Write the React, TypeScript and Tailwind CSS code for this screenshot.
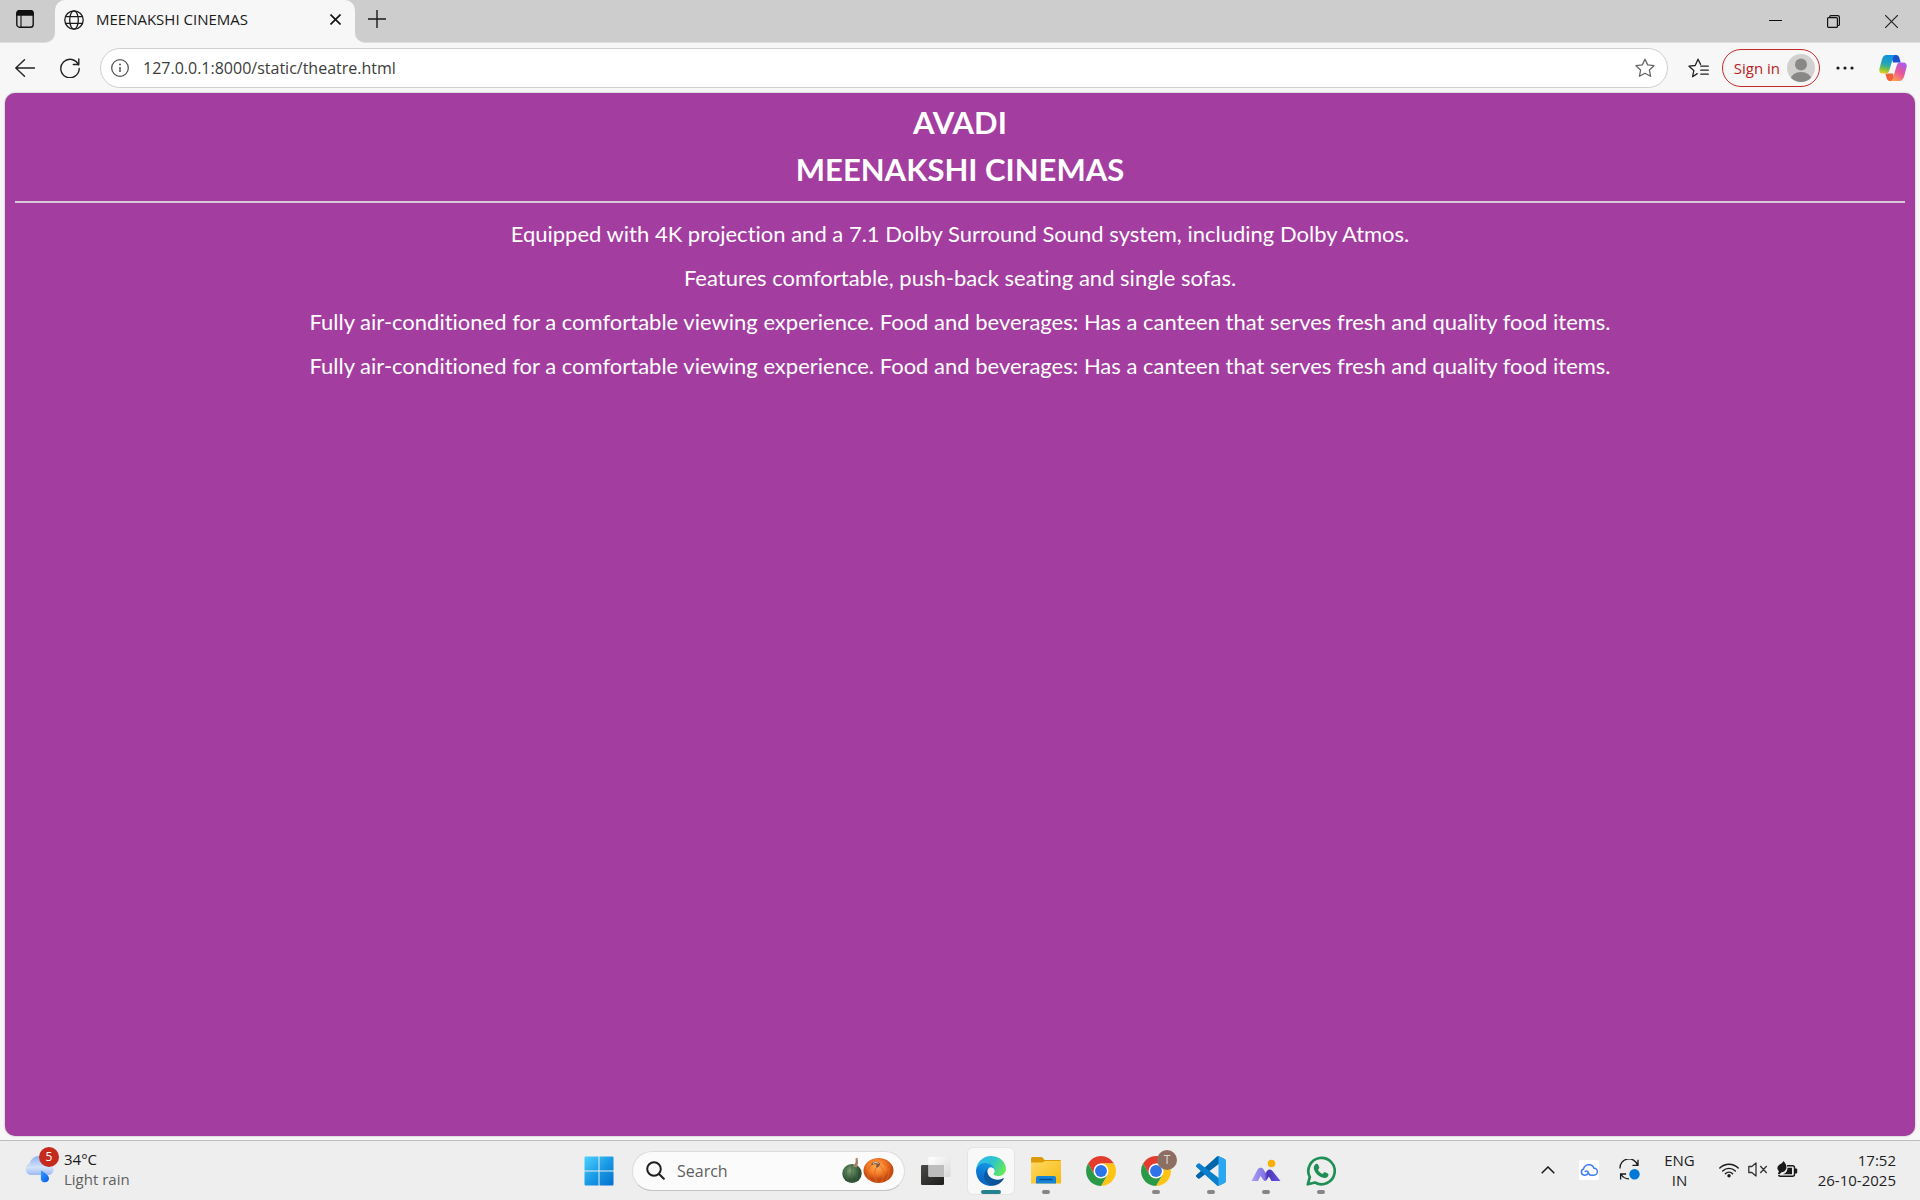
import type { ReactNode } from "react";

const paragraphs = [
  "Equipped with 4K projection and a 7.1 Dolby Surround Sound system, including Dolby Atmos.",
  "Features comfortable, push-back seating and single sofas.",
  "Fully air-conditioned for a comfortable viewing experience. Food and beverages: Has a canteen that serves fresh and quality food items.",
  "Fully air-conditioned for a comfortable viewing experience. Food and beverages: Has a canteen that serves fresh and quality food items.",
];

function TabActionsIcon() {
  return (
    <svg width="18" height="18" viewBox="0 0 18 18" fill="none" stroke="#111" strokeWidth="1.4">
      <rect x="0.8" y="0.8" width="16.4" height="16.4" rx="2.8" />
      <path d="M1 5V3a2.4 2.4 0 0 1 2.4-2.4h11.2A2.4 2.4 0 0 1 17 3v2z" fill="#111" />
      <path d="M5 5v12" strokeWidth="1.1" />
    </svg>
  );
}

function GlobeIcon() {
  return (
    <svg width="20" height="20" viewBox="0 0 20 20" fill="none" stroke="#1b1b1b" strokeWidth="1.3">
      <circle cx="10" cy="10" r="9.2" />
      <ellipse cx="10" cy="10" rx="4.3" ry="9.2" />
      <path d="M1.7 6.7h16.6M1.7 13.3h16.6" />
    </svg>
  );
}

function StarIcon({ lines = false }: { lines?: boolean }) {
  return lines ? (
    <svg width="21" height="20" viewBox="0 0 21 20" fill="none" stroke="#222" strokeWidth="1.3" strokeLinecap="round" strokeLinejoin="round">
      <path d="M9.2 15.6 4.6 18.7l1.2-6.1L1 8.2l6.2-.7L10 1.2l2.6 5.2M12.8 8.2h7.5M12.8 12.2h7.5M12.8 16.2h7.5" />
    </svg>
  ) : (
    <svg width="20" height="20" viewBox="0 0 20 20" fill="none" stroke="#666" strokeWidth="1.3" strokeLinejoin="round">
      <path d="m10 1.2 2.7 5.7 6.3.8-4.6 4.3 1.2 6.3-5.6-3.1-5.6 3.1L5.6 12 1 7.7l6.3-.8z" />
    </svg>
  );
}

function CopilotIcon() {
  return (
    <svg width="28" height="26" viewBox="0 0 28 26">
      <defs>
        <linearGradient id="cpA" x1="0.4" y1="0" x2="0.2" y2="1">
          <stop offset="0" stopColor="#0d91e1" />
          <stop offset="0.5" stopColor="#2aa8b0" />
          <stop offset="0.75" stopColor="#7fc241" />
          <stop offset="1" stopColor="#f5d020" />
        </linearGradient>
        <linearGradient id="cpB" x1="0.8" y1="0" x2="0.2" y2="1">
          <stop offset="0" stopColor="#a45cf0" />
          <stop offset="0.5" stopColor="#e8559a" />
          <stop offset="1" stopColor="#ffa34e" />
        </linearGradient>
      </defs>
      <path d="M12 0h5.200c1.700 0 2.600 1.200 3.100 2.800L21.700 7.500H14z" fill="#1b4fd0" />
      <path d="M16 26h-5.200c-1.700 0-2.600-1.200-3.100-2.800L6.300 18.500H14z" fill="#f0603a" />
      <path d="M7.800 0h8.400c-1.300.5-1.800 1.600-2.200 3l-3.700 12.500C9.700 17.500 8.600 18.500 7 18.500H3.600C.9 18.500-.2 16.400.5 13.600L3 4.200C3.800 1.500 5.300 0 7.800 0z" fill="url(#cpA)" />
      <path d="M20.200 26h-8.400c1.300-.5 1.800-1.600 2.200-3l3.700-12.500c.6-2 1.700-3 3.300-3h3.400c2.700 0 3.800 2.100 3.100 4.900L25 21.800c-.8 2.700-2.300 4.200-4.800 4.200z" fill="url(#cpB)" />
    </svg>
  );
}

function WeatherIcon() {
  return (
    <svg width="32" height="28" viewBox="0 0 32 28">
      <defs>
        <linearGradient id="wc" x1="0" y1="0" x2="0" y2="1">
          <stop offset="0" stopColor="#8fb2ee" />
          <stop offset="0.6" stopColor="#d3e2fa" />
          <stop offset="1" stopColor="#9cbaf0" />
        </linearGradient>
        <linearGradient id="wd" x1="0" y1="0" x2="1" y2="1">
          <stop offset="0" stopColor="#35a0ff" />
          <stop offset="1" stopColor="#0759e8" />
        </linearGradient>
      </defs>
      <path d="M6.500 20A6 6 0 0 1 5.500 8.600 9.500 9.500 0 0 1 24 8.200 6 6 0 0 1 25 20z" fill="url(#wc)" />
      <path d="M17 15.500c4 2.300 8 4.700 8 8.300a4.200 4.200 0 0 1-8.200.4z" fill="url(#wd)" />
    </svg>
  );
}

function WindowsIcon() {
  return (
    <svg width="30" height="30" viewBox="0 0 30 30">
      <defs>
        <linearGradient id="win" gradientUnits="userSpaceOnUse" x1="0" y1="0" x2="30" y2="30">
          <stop offset="0" stopColor="#4fd4ff" />
          <stop offset="0.5" stopColor="#1a9be5" />
          <stop offset="1" stopColor="#006fd0" />
        </linearGradient>
      </defs>
      <path d="M1.500.5h13v14H.5v-13a1 1 0 0 1 1-1zM15.500.5h13a1 1 0 0 1 1 1v13h-14zM.5 15.500h14v14h-13a1 1 0 0 1-1-1zM15.500 15.500h14v13a1 1 0 0 1-1 1h-13z" fill="url(#win)" />
    </svg>
  );
}

function PumpkinsIcon() {
  return (
    <svg width="52" height="28" viewBox="0 0 52 28">
      <defs>
        <radialGradient id="pg" cx="0.4" cy="0.35">
          <stop offset="0" stopColor="#7da072" />
          <stop offset="1" stopColor="#2c4f33" />
        </radialGradient>
        <radialGradient id="po" cx="0.45" cy="0.35">
          <stop offset="0" stopColor="#ffb054" />
          <stop offset="0.6" stopColor="#f47b28" />
          <stop offset="1" stopColor="#c54a12" />
        </radialGradient>
      </defs>
      <ellipse cx="10" cy="16.500" rx="9.700" ry="9.500" fill="url(#pg)" />
      <path d="M6 8.500c-3 5-2.500 12 1.500 17M10.500 8c-1 6-1 12 0 18M14 8.500c3 5 2 12-1.500 17" fill="none" stroke="#3f6546" strokeWidth="0.7" />
      <path d="M10.500 9.500c3-1.500 3.500-5 3-8l2-.8c1 4 .6 7.500-1 9.800z" fill="#a58267" />
      <ellipse cx="36.500" cy="13.500" rx="15" ry="12.500" fill="url(#po)" />
      <path d="M31 7c-6 3-7 12-2 17M35 9c-3 5-3 11 0 16.500M38 9c5 4 5 11 1 16.500M41 6c7 3 8 11 3 17" fill="none" stroke="#e06a22" strokeWidth="0.9" />
      <path d="M29.500 6.500c2-2.500 7-2.500 8.500 0 .5 1.500-1 3-2.500 4.200l-1.700-1c1-1.200 1-2.300-.3-2.700-1.300-.2-2 .8-4 .8z" fill="#7e5b42" />
      <path d="M31 6.500c1.500-1.200 4-1.200 5.500-.2" fill="none" stroke="#f6dcc5" />
    </svg>
  );
}

function TaskViewIcon() {
  return (
    <svg width="30" height="30" viewBox="0 0 30 30">
      <defs>
        <linearGradient id="tvd" x1="0" y1="0" x2="1" y2="1">
          <stop offset="0" stopColor="#4a4a48" />
          <stop offset="1" stopColor="#1d1d1c" />
        </linearGradient>
        <linearGradient id="tvl" x1="0" y1="0" x2="1" y2="1">
          <stop offset="0" stopColor="#fff" />
          <stop offset="1" stopColor="#d9d9d9" />
        </linearGradient>
      </defs>
      <rect x="0" y="9" width="23" height="20" rx="1.200" fill="url(#tvd)" />
      <rect x="7.500" y="1" width="22" height="20" rx="1.200" fill="url(#tvl)" />
      <path d="M7.500 9H23v12H8.700a1.200 1.200 0 0 1-1.200-1.200z" fill="#bdbdbd" />
    </svg>
  );
}

function EdgeIcon() {
  return (
    <svg width="30" height="30" viewBox="0 0 256 256">
      <defs>
        <linearGradient id="e1" x1="0.25" y1="0.5" x2="1" y2="0.5">
          <stop offset="0" stopColor="#0c59a4" />
          <stop offset="1" stopColor="#114a8b" />
        </linearGradient>
        <linearGradient id="e2" x1="0.700" y1="0" x2="0.300" y2="1">
          <stop offset="0" stopColor="#1b9de2" />
          <stop offset="0.5" stopColor="#0b7dd8" />
          <stop offset="1" stopColor="#0a5eb8" />
        </linearGradient>
        <linearGradient id="e3" x1="0" y1="0.200" x2="1" y2="0.600">
          <stop offset="0" stopColor="#35b8f1" />
          <stop offset="0.5" stopColor="#2cc3d2" />
          <stop offset="1" stopColor="#66eb55" />
        </linearGradient>
      </defs>
      <path d="M231 190.500c-3.400 1.800-6.900 3.400-10.500 4.700a101 101 0 0 1-35.700 6.400c-47 0-88-32.300-88-73.900a31.400 31.400 0 0 1 16.400-27.300c-42.600 1.800-53.500 46.200-53.500 72.100 0 73.500 67.700 80.900 82.300 80.900 7.900 0 19.700-2.300 26.900-4.600l1.300-.4a128.300 128.300 0 0 0 66.600-52.800 4 4 0 0 0-5.800-5.100z" fill="url(#e1)" />
      <path d="M105.700 241.400A79.200 79.200 0 0 1 83 220.100a80.700 80.700 0 0 1 29.500-120c3.200-1.400 8.500-4.100 15.600-4a32.400 32.400 0 0 1 25.700 13 31.900 31.900 0 0 1 6.300 18.700c0-.2 24.500-79.600-80-79.600-43.900 0-80 41.700-80 78.200a130.200 130.200 0 0 0 12.100 56 128 128 0 0 0 156.400 67 75.500 75.500 0 0 1-62.800-8z" fill="url(#e2)" />
      <path d="M152.300 148.900c-.8 1-3.300 2.500-3.300 5.700 0 2.600 1.700 5.100 4.700 7.200 14.300 10 41.400 8.600 41.500 8.600a59.600 59.600 0 0 0 30.300-8.300 61.400 61.400 0 0 0 30.400-52.900c.3-22.400-8-37.300-11.300-43.900C223.500 23.900 177.700 0 128 0A128 128 0 0 0 0 126.200c.5-36.500 36.800-66 80-66 3.500 0 23.500.3 42 10a72.600 72.600 0 0 1 30.900 29.300c6.100 10.600 7.200 24.100 7.200 29.500s-2.700 13.300-7.800 19.900z" fill="url(#e3)" />
    </svg>
  );
}

function FolderIcon() {
  return (
    <svg width="30" height="27" viewBox="0 0 30 27">
      <defs>
        <linearGradient id="fy" x1="0" y1="0" x2="1" y2="1">
          <stop offset="0" stopColor="#ffd965" />
          <stop offset="1" stopColor="#f7b90e" />
        </linearGradient>
      </defs>
      <path d="M0 1.500A1.500 1.500 0 0 1 1.500 0h8.700c.8 0 1.300.3 1.800.9L13.500 3H29a1 1 0 0 1 1 1v4H0z" fill="#dc9a08" />
      <path d="M0 5.500h11.500L14 4h16v22.500H0z" fill="url(#fy)" />
      <path d="M5 26.500V21a2 2 0 0 1 2-2h16a2 2 0 0 1 2 2v5.500z" fill="#1583d8" />
      <path d="M9 22.500h12" stroke="#064f93" strokeWidth="1.500" strokeLinecap="round" />
    </svg>
  );
}

function ChromeIcon() {
  return (
    <svg width="30" height="30" viewBox="0 0 48 48">
      <path d="M24 12h20.780A24 24 0 0 0 3.220 12L13.610 30z" fill="#e33b2e" />
      <path d="M34.390 30 24 48A24 24 0 0 0 44.780 12H24z" fill="#fdc315" />
      <path d="M13.610 30 3.220 12A24 24 0 0 0 24 48l10.390-18z" fill="#2a9a48" />
      <circle cx="24" cy="24" r="12" fill="#fff" />
      <circle cx="24" cy="24" r="9.500" fill="#2c74e8" />
    </svg>
  );
}

function VsCodeIcon() {
  return (
    <svg width="30" height="30" viewBox="0 0 100 100">
      <path d="M96.500 10.800 75.900.900a6.200 6.200 0 0 0-7.100 1.200L1.300 63.600a4.200 4.200 0 0 0 0 6.200l5.500 5a4.200 4.200 0 0 0 5.400.2l81.200-61.600c2.700-2.100 6.600-.1 6.600 3.300v-.3c0-2.400-1.400-4.600-3.500-5.600z" fill="#0065a9" />
      <path d="m96.500 89.200-20.600 9.900a6.200 6.200 0 0 1-7.100-1.200L1.300 36.400a4.200 4.200 0 0 1 0-6.200l5.500-5a4.200 4.200 0 0 1 5.400-.2l81.200 61.600c2.700 2.100 6.600.1 6.600-3.300v.3c0 2.400-1.400 4.600-3.500 5.600z" fill="#0a80cc" />
      <path d="M75.900 99.100a6.200 6.200 0 0 1-7.100-1.200c2.300 2.300 6.200.7 6.200-2.600V4.700c0-3.300-3.900-4.900-6.200-2.600A6.200 6.200 0 0 1 75.900.900l20.600 9.900a6.200 6.200 0 0 1 3.500 5.600v67.200c0 2.400-1.400 4.600-3.500 5.600z" fill="#2aa7f2" />
    </svg>
  );
}

function PeaksIcon() {
  return (
    <svg width="30" height="24" viewBox="0 0 30 24">
      <defs>
        <linearGradient id="pk" x1="0" y1="0" x2="1" y2="0">
          <stop offset="0" stopColor="#aba0f3" />
          <stop offset="0.45" stopColor="#8373e6" />
          <stop offset="0.55" stopColor="#4b35b8" />
          <stop offset="1" stopColor="#6d51e0" />
        </linearGradient>
      </defs>
      <path d="M.5 22 6.600 10.500c1.300-2.400 4.800-2.400 6 0l2 3.600 1.300-2c1.300-2.100 4.300-2.100 5.600 0L29.500 22h-9l-2.600-4.500-2.500 4-2.200.5-3.700-5L7 22z" fill="url(#pk)" />
      <circle cx="20.500" cy="4.500" r="3.800" fill="#fbae05" />
    </svg>
  );
}

function WhatsAppIcon() {
  return (
    <svg width="30" height="30" viewBox="0 0 30 30">
      <path d="m1.800 28.300 2-7.200A13.200 13.200 0 1 1 9 26.500z" fill="none" stroke="#1f8f55" strokeWidth="2.700" strokeLinejoin="round" />
      <path d="M10.300 7.800c.6-.3 1.300-.1 1.600.5l1.300 2.800c.2.500.1 1-.2 1.400l-1 1.200c1 2 2.500 3.400 4.500 4.300l1.300-1.400c.3-.4.800-.5 1.300-.3l2.700 1.300c.6.300.8.900.7 1.500-.4 2-2.200 3.100-4.200 2.900-5.500-.7-10-5.200-10.500-9.900-.1-1.800.9-3.500 2.500-4.300z" fill="#1f8f55" />
    </svg>
  );
}

function CloudTile() {
  return (
    <svg width="20" height="20" viewBox="0 0 20 20">
      <rect width="20" height="20" rx="2" fill="#fff" />
      <path d="M9.500 13.200c-1 1.300-2.200 2-4.200 2A3.200 3.200 0 0 1 4.500 9 5.500 5.500 0 0 1 15 8.200a3.500 3.500 0 0 1-.2 7h-2.600c-2.400 0-2.300-1.700-3.200-3.200-.7-1.100-1.900-1.200-2.800-.6" fill="none" stroke="#3f7df0" strokeWidth="1.500" strokeLinecap="round" />
    </svg>
  );
}

function SyncIcon() {
  return (
    <svg width="21" height="21" viewBox="0 0 21 21" fill="none" stroke="#1a1a1a" strokeWidth="1.300">
      <path d="M1 9.500A9 9 0 0 1 18.500 6M19 .8V6.300h-5.500M10 19.800a9 9 0 0 1-8-4.500M1.600 20.500V15h5.500" />
      <circle cx="15.500" cy="15.300" r="5.200" fill="#0078d7" stroke="none" />
    </svg>
  );
}

function WifiIcon() {
  return (
    <svg width="20" height="16" viewBox="0 0 20 16" fill="none" stroke="#1a1a1a" strokeWidth="1.400" strokeLinecap="round">
      <path d="M.8 6a13 13 0 0 1 18.400 0M3.700 8.900a9 9 0 0 1 12.600 0M6.400 11.700a5.200 5.200 0 0 1 7.200 0" />
      <circle cx="10" cy="13.800" r="1.700" fill="#1a1a1a" stroke="none" />
    </svg>
  );
}

function MutedIcon() {
  return (
    <svg width="20" height="15" viewBox="0 0 20 15" fill="none" stroke="#333" strokeWidth="1.300" strokeLinejoin="round">
      <path d="M.8 4.500h3L8 1v13L3.800 10.500h-3zM12.300 4l6.400 7M18.700 4l-6.400 7" />
    </svg>
  );
}

function BatteryIcon() {
  return (
    <svg width="21" height="17" viewBox="0 0 21 17">
      <path d="M10 4.800h5.500a2 2 0 0 1 2 2v6.500a2 2 0 0 1-2 2H3.500c-1 0-1.700-.5-2-1.200" fill="none" stroke="#1a1a1a" strokeWidth="1.400" />
      <path d="M10.500 6.800H15v6.500H5.500c3-.5 5-3 5-6.500z" fill="#1a1a1a" />
      <path d="M18 7.500h1.200a1 1 0 0 1 1 1v3a1 1 0 0 1-1 1H18z" fill="#1a1a1a" />
      <path d="M6.500 0c2.300 2.300 3.600 5.300 2.600 8-.8 2-2.600 3.300-4.500 3.300L2.200 13.500.8 12.800l1.200-2.600C-.2 8.500 0 5.700 2 4c1.300-1.200 3.500-1.500 4.500-4z" fill="#1a1a1a" />
    </svg>
  );
}

function TaskButton({ label, open = false, active = false, children }: { label: string; open?: boolean; active?: boolean; children: ReactNode }) {
  return (
    <button
      aria-label={label}
      className={
        active
          ? "relative flex size-12 items-center justify-center rounded-md border border-[#e4e4e4] bg-[#f8f8f8]"
          : "relative flex size-12 items-center justify-center rounded-md border border-transparent"
      }
    >
      {children}
      {open && (
        <span
          className={
            active
              ? "absolute bottom-0 left-1/2 h-1 w-5 -translate-x-1/2 rounded-full bg-[#238391]"
              : "absolute bottom-0 left-1/2 h-1 w-2 -translate-x-1/2 rounded-full bg-[#868686]"
          }
        />
      )}
    </button>
  );
}

function TabStrip() {
  return (
    <header className="flex h-[43px] shrink-0">
      <div className="flex w-[55px] items-center rounded-br-[10px] border-b border-[#dedede] bg-[#cdcdcd] pb-1 pl-4">
        <button aria-label="Tab actions">
          <TabActionsIcon />
        </button>
      </div>
      <div className="w-[300px] bg-[#cdcdcd]">
        <div className="flex h-full items-center rounded-t-[10px] bg-[#f7f7f7] pr-3 pb-1 pl-[9px]">
          <GlobeIcon />
          <span className="ml-3 flex-1 text-[15px] text-[#1a1a1a]">MEENAKSHI CINEMAS</span>
          <button aria-label="Close tab" className="p-[2px]">
            <svg width="11" height="11" viewBox="0 0 11 11" stroke="#111" strokeWidth="1.600">
              <path d="m.5.500 10 10M10.500.5l-10 10" />
            </svg>
          </button>
        </div>
      </div>
      <div className="flex flex-1 items-center justify-between rounded-bl-[10px] border-b border-[#dedede] bg-[#cdcdcd] pb-1 pl-[13px]">
        <button aria-label="New tab">
          <svg width="18" height="18" viewBox="0 0 18 18" stroke="#1a1a1a" strokeWidth="1.400">
            <path d="M9 0v18M0 9h18" />
          </svg>
        </button>
        <div className="flex pt-1">
          <button aria-label="Minimize" className="flex h-9 w-[58px] items-center justify-center">
            <svg width="13" height="13" viewBox="0 0 13 13" stroke="#111">
              <path d="M0 5.500h13" />
            </svg>
          </button>
          <button aria-label="Restore" className="flex h-9 w-[58px] items-center justify-center">
            <svg width="13" height="13" viewBox="0 0 13 13" fill="none" stroke="#111" strokeWidth="1.200">
              <rect x="0.600" y="2.600" width="9.800" height="9.800" rx="1" />
              <path d="M2.800 2.500V1.500a.9.900 0 0 1 .9-.9h7.100a1.600 1.600 0 0 1 1.600 1.600v7.400a.9.900 0 0 1-.9.900h-1" />
            </svg>
          </button>
          <button aria-label="Close window" className="flex h-9 w-[58px] items-center justify-center">
            <svg width="13" height="13" viewBox="0 0 13 13" stroke="#222" strokeWidth="1.200">
              <path d="m0 0 13 13M13 0 0 13" />
            </svg>
          </button>
        </div>
      </div>
    </header>
  );
}

function Toolbar() {
  return (
    <div className="flex h-[50px] shrink-0 items-center pr-[13px] pl-[15px]">
      <button aria-label="Back">
        <svg width="20" height="18" viewBox="0 0 20 18" fill="none" stroke="#222" strokeWidth="1.400" strokeLinecap="round" strokeLinejoin="round">
          <path d="M9.500.8.800 9l8.700 8.200M1 9h18.500" />
        </svg>
      </button>
      <button aria-label="Refresh" className="ml-[25px]">
        <svg width="20" height="20" viewBox="0 0 20 20" fill="none" stroke="#222" strokeWidth="1.400" strokeLinecap="round" strokeLinejoin="round">
          <path d="M18.500 7A9.200 9.200 0 1 0 19.200 10.500M18.800 1v5.500h-5.500" />
        </svg>
      </button>
      <div className="ml-5 flex h-10 flex-1 items-center rounded-full border border-[#cfcfcf] bg-white pr-3 pl-[10px]">
        <svg width="18" height="18" viewBox="0 0 18 18" fill="none" stroke="#555" strokeWidth="1.300">
          <circle cx="9" cy="9" r="8.300" />
          <path d="M9 8v5" strokeWidth="1.500" />
          <circle cx="9" cy="5.500" r="1" fill="#555" stroke="none" />
        </svg>
        <input
          type="text"
          aria-label="Address bar"
          defaultValue="127.0.0.1:8000/static/theatre.html"
          className="ml-[14px] flex-1 bg-transparent text-base text-[#3c3c3c] outline-none"
        />
        <button aria-label="Add to favorites">
          <StarIcon />
        </button>
      </div>
      <button aria-label="Favorites" className="ml-5">
        <StarIcon lines />
      </button>
      <button className="ml-[13px] flex h-[38px] items-center gap-[7px] rounded-full border border-[#c02a2a] pr-1 pl-[11px] text-[15px] text-[#b82222]">
        Sign in
        <svg width="28" height="28" viewBox="0 0 28 28">
          <defs>
            <clipPath id="avatar">
              <circle cx="14" cy="14" r="14" />
            </clipPath>
          </defs>
          <circle cx="14" cy="14" r="14" fill="#d2d0ce" />
          <g fill="#8a8886" clipPath="url(#avatar)">
            <circle cx="14" cy="10.500" r="6" />
            <ellipse cx="14" cy="26" rx="10.500" ry="8" />
          </g>
        </svg>
      </button>
      <button aria-label="Settings and more" className="ml-4">
        <svg width="18" height="4" viewBox="0 0 18 4" fill="#1a1a1a">
          <circle cx="2" cy="2" r="1.600" />
          <circle cx="9" cy="2" r="1.600" />
          <circle cx="16" cy="2" r="1.600" />
        </svg>
      </button>
      <button aria-label="Copilot" className="ml-[25px]">
        <CopilotIcon />
      </button>
    </div>
  );
}

function Taskbar() {
  return (
    <footer className="grid h-[60px] shrink-0 grid-cols-[1fr_auto_1fr] items-center border-t border-[#bdbdbd] bg-[#eeeeee]">
      <button className="flex items-center justify-self-start pb-1 pl-6 text-left text-[15px] leading-5">
        <span className="relative mr-2">
          <WeatherIcon />
          <span className="absolute -top-2 left-[15px] flex size-5 items-center justify-center rounded-full bg-[#c42b1c] text-xs text-white">5</span>
        </span>
        <span>
          <span className="block text-[#1a1a1a]">34°C</span>
          <span className="block text-[#5f5f5f]">Light rain</span>
        </span>
      </button>

      <nav className="flex items-center gap-[7px]" aria-label="Taskbar">
        <TaskButton label="Start">
          <WindowsIcon />
        </TaskButton>
        <label className="ml-[2px] flex h-10 w-[273px] items-center rounded-full border border-[#dcdcdc] border-b-[#c4c4c4] bg-[#fbfbfb] pr-[10px] pl-[13px]">
          <svg width="19" height="19" viewBox="0 0 19 19" fill="none" stroke="#1f1f1f" strokeWidth="2" strokeLinecap="round">
            <circle cx="8" cy="8" r="6.800" />
            <path d="m13 13 4.800 4.800" />
          </svg>
          <input type="text" aria-label="Search" placeholder="Search" className="ml-3 w-0 flex-1 bg-transparent text-base outline-none placeholder:text-[#606060]" />
          <PumpkinsIcon />
        </label>
        <TaskButton label="Task view"><TaskViewIcon /></TaskButton>
        <TaskButton label="Microsoft Edge" open active><EdgeIcon /></TaskButton>
        <TaskButton label="File Explorer" open><FolderIcon /></TaskButton>
        <TaskButton label="Google Chrome"><ChromeIcon /></TaskButton>
        <TaskButton label="Google Chrome profile" open>
          <ChromeIcon />
          <span className="absolute top-[2px] right-[2px] flex size-5 items-center justify-center rounded-full bg-[#8d6e63] text-xs text-[#e0d6d2]">T</span>
        </TaskButton>
        <TaskButton label="Visual Studio Code" open><VsCodeIcon /></TaskButton>
        <TaskButton label="Peaks" open><PeaksIcon /></TaskButton>
        <TaskButton label="WhatsApp" open><WhatsAppIcon /></TaskButton>
      </nav>

      <div className="flex items-center justify-self-end pr-6 pb-[2px] text-[15px] leading-5 text-[#1f1f1f]">
        <button aria-label="Show hidden icons">
          <svg width="14" height="8" viewBox="0 0 14 8" fill="none" stroke="#1a1a1a" strokeWidth="1.500">
            <path d="m.7 7.300 6.300-6.300 6.300 6.300" />
          </svg>
        </button>
        <button aria-label="Cloud storage" className="ml-6"><CloudTile /></button>
        <button aria-label="Sync status" className="ml-5"><SyncIcon /></button>
        <button className="ml-6 text-center">
          <span className="block">ENG</span>
          <span className="block">IN</span>
        </button>
        <button className="ml-6 flex items-center gap-[9px]" aria-label="Network, volume and battery">
          <WifiIcon />
          <MutedIcon />
          <BatteryIcon />
        </button>
        <button className="ml-5 text-right">
          <span className="block">17:52</span>
          <span className="block">26-10-2025</span>
        </button>
      </div>
    </footer>
  );
}

export default function App() {
  return (
    <div className="flex min-h-screen flex-col bg-[#f7f7f7] font-['Open_Sans',sans-serif]">
      <TabStrip />
      <Toolbar />
      <main className="mx-[5px] mb-1 flex-1 rounded-[10px] bg-[#a43da0] px-[10px] pt-[6px] text-center font-['Lato',sans-serif] text-white shadow-[0_0_2px_rgba(0,0,0,0.35)] [font-variant-ligatures:none]">
        <h1 className="text-[31px] leading-[47px] font-bold">AVADI</h1>
        <h1 className="text-[31px] leading-[47px] font-bold">MEENAKSHI CINEMAS</h1>
        <hr className="mt-2 mb-[9px] border-t-2 border-[#d8c8d8]" />
        {paragraphs.map((text, i) => (
          <p key={i} className="text-[22px] leading-[44px]">{text}</p>
        ))}
      </main>
      <Taskbar />
    </div>
  );
}
